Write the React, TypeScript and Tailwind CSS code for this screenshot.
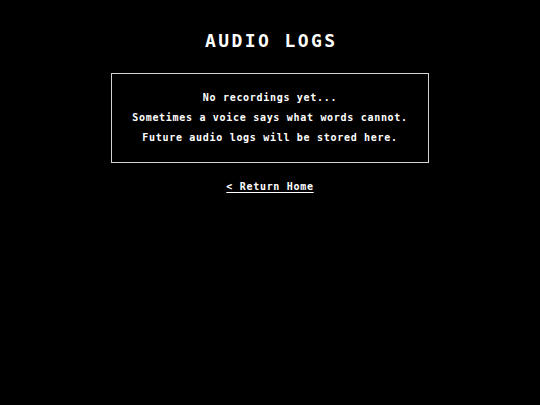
export default function App() {
  const mono = { fontFamily: '"DejaVu Sans Mono", "Liberation Mono", monospace' };
  return (
    <div className="min-h-[405px] w-full bg-black text-white flex flex-col items-center pt-[29px]" style={mono}>
      <h1 className="text-[18px] leading-[24px] font-bold tracking-[2.4px] pl-[2.4px]">AUDIO LOGS</h1>
      <div className="mt-[20px] w-[318px] h-[90px] border border-[#d4d4d4] flex flex-col items-center justify-center text-[10px] leading-[20px] font-bold tracking-[0.7px]">
        <p>No recordings yet...</p>
        <p>Sometimes a voice says what words cannot.</p>
        <p>Future audio logs will be stored here.</p>
      </div>
      <a href="#" className="mt-[16px] text-[10px] leading-[16px] font-bold tracking-[0.7px] underline underline-offset-2">
        &lt; Return Home
      </a>
    </div>
  );
}
